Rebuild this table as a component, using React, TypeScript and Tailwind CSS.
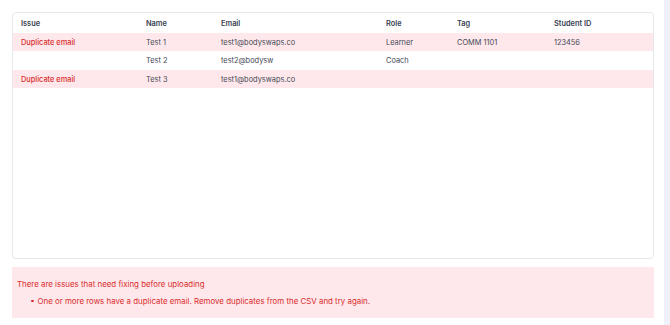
import React from "react";

type Row = { issue: string; name: string; email: string; role: string; tag: string; sid: string; bad: boolean };

const rows: Row[] = [
  { issue: "Duplicate email", name: "Test 1", email: "test1@bodyswaps.co", role: "Learner", tag: "COMM 1101", sid: "123456", bad: true },
  { issue: "", name: "Test 2", email: "test2@bodysw", role: "Coach", tag: "", sid: "", bad: false },
  { issue: "Duplicate email", name: "Test 3", email: "test1@bodyswaps.co", role: "", tag: "", sid: "", bad: true },
];

const cols = ["w-[125px]", "w-[75px]", "w-[165px]", "w-[71px]", "w-[97px]", "flex-1"];

export default function App() {
  return (
    <div className="w-[670px] h-[325px] flex bg-white overflow-hidden" style={{ fontFamily: "Inter, 'Noto Sans', sans-serif" }}>
      <div className="w-[642px] ml-[12px] pt-[12px] flex flex-col">
        <div className="h-[247px] border border-[#e6e8ec] rounded-[4px] bg-white overflow-hidden">
          <div className="flex h-[19.5px] items-center text-[7.4px] font-semibold text-[#374151] pt-[2px]">
            {["Issue", "Name", "Email", "Role", "Tag", "Student ID"].map((h, i) => (
              <div key={h} className={`${cols[i]} pl-[8px]`}>{h}</div>
            ))}
          </div>
          {rows.map((r, idx) => (
            <div key={idx} className={`flex h-[18.5px] items-center pt-[1.5px] text-[7.4px] ${r.bad ? "bg-[#ffe8eb]" : "bg-white"}`}>
              <div className={`${cols[0]} pl-[8px] text-[#d92d2d] font-medium`}>{r.issue}</div>
              <div className={`${cols[1]} pl-[8px] text-[#3f4856]`}>{r.name}</div>
              <div className={`${cols[2]} pl-[8px] text-[#3f4856]`}>{r.email}</div>
              <div className={`${cols[3]} pl-[8px] text-[#3f4856]`}>{r.role}</div>
              <div className={`${cols[4]} pl-[8px] text-[#3f4856]`}>{r.tag}</div>
              <div className={`${cols[5]} pl-[8px] text-[#3f4856]`}>{r.sid}</div>
            </div>
          ))}
        </div>
        <div className="mt-[8px] h-[51px] bg-[#ffe8eb] pl-[5px] pt-[11px] text-[7.9px] text-[#d92d2d]">
          <div className="leading-[12px]">There are issues that need fixing before uploading</div>
          <div className="mt-[5px] leading-[12px] flex items-center pl-[14px]">
            <span className="w-[2.5px] h-[2.5px] rounded-full bg-[#d92d2d] mr-[4px]" />
            <span>One or more rows have a duplicate email. Remove duplicates from the CSV and try again.</span>
          </div>
        </div>
      </div>
      <div className="ml-[10px] w-[6px] h-full bg-[#eef2f8]" />
    </div>
  );
}
